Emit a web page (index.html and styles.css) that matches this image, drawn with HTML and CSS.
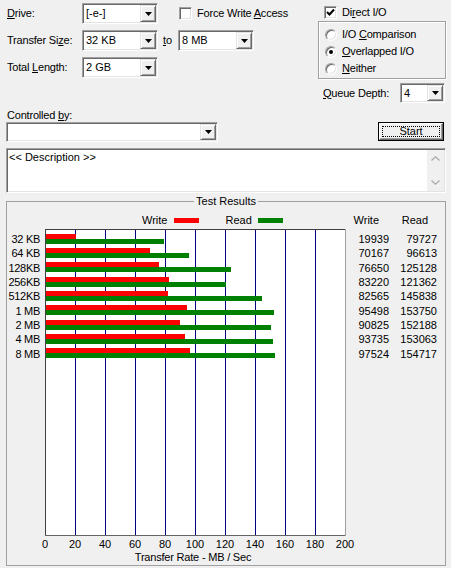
FILE: index.html
```html
<!DOCTYPE html>
<html>
<head>
<meta charset="utf-8">
<title>Disk Benchmark</title>
<link rel="stylesheet" href="styles.css">
</head>
<body>
<div class="win">
  <div class="top">
    <div class="left">
      <div class="row">
        <span class="lbl"><u>D</u>rive:</span>
        <div class="combo w76"><span class="val">[-e-]</span><span class="btn"><svg width="7" height="4" viewBox="0 0 7 4"><polygon points="0,0 7,0 3.5,4" fill="#000"/></svg></span></div>
        <span class="fwa"><span class="cb"></span><span>Force Write <u>A</u>ccess</span></span>
      </div>
      <div class="row">
        <span class="lbl">Transfer Si<u>z</u>e:</span>
        <div class="combo w76"><span class="val">32 KB</span><span class="btn"><svg width="7" height="4" viewBox="0 0 7 4"><polygon points="0,0 7,0 3.5,4" fill="#000"/></svg></span></div>
        <span class="to"><u>t</u>o</span>
        <div class="combo w76"><span class="val">8 MB</span><span class="btn"><svg width="7" height="4" viewBox="0 0 7 4"><polygon points="0,0 7,0 3.5,4" fill="#000"/></svg></span></div>
      </div>
      <div class="row">
        <span class="lbl">Total <u>L</u>ength:</span>
        <div class="combo w76"><span class="val">2 GB</span><span class="btn"><svg width="7" height="4" viewBox="0 0 7 4"><polygon points="0,0 7,0 3.5,4" fill="#000"/></svg></span></div>
      </div>
    </div>
    <div class="right">
      <div class="dio"><span class="cb"><svg width="9" height="9" viewBox="0 0 9 9"><polyline points="1,4 3.5,6.5 8,1.5" fill="none" stroke="#000" stroke-width="2"/></svg></span><span>Di<u>r</u>ect I/O</span></div>
      <div class="rgroup">
        <div class="rrow"><span class="rb"></span><span>I/O <u>C</u>omparison</span></div>
        <div class="rrow"><span class="rb on"></span><span><u>O</u>verlapped I/O</span></div>
        <div class="rrow"><span class="rb"></span><span><u>N</u>either</span></div>
      </div>
      <div class="qd">
        <span class="qlbl"><u>Q</u>ueue Depth:</span>
        <div class="combo w45 h20"><span class="val">4</span><span class="btn"><svg width="7" height="4" viewBox="0 0 7 4"><polygon points="0,0 7,0 3.5,4" fill="#000"/></svg></span></div>
      </div>
    </div>
  </div>

  <div class="ctl-lbl">Controlled <u>b</u>y:</div>
  <div class="ctl-row">
    <div class="combo w212 h20"><span class="val"></span><span class="btn"><svg width="7" height="4" viewBox="0 0 7 4"><polygon points="0,0 7,0 3.5,4" fill="#000"/></svg></span></div>
    <div class="start"><div class="face"><span class="focus">Start</span></div></div>
  </div>

  <div class="desc">
    <div class="txt">&lt;&lt; Description &gt;&gt;</div>
    <div class="sb">
      <span class="arr"><svg width="9" height="5" viewBox="0 0 9 5"><polyline points="0.5,4.5 4.5,0.8 8.5,4.5" fill="none" stroke="#a8a8a8" stroke-width="1.2"/></svg></span>
      <span class="arr"><svg width="9" height="5" viewBox="0 0 9 5"><polyline points="0.5,0.5 4.5,4.2 8.5,0.5" fill="none" stroke="#a8a8a8" stroke-width="1.2"/></svg></span>
    </div>
  </div>

  <fieldset class="results">
    <legend>Test Results</legend>
    <div class="chart">
      <div class="legend-cell"><span>Write</span><span class="sw red"></span><span class="rd">Read</span><span class="sw green"></span></div>
      <div class="hw">Write</div>
      <div class="hr">Read</div>

      <div class="ylabels">
        <div>32 KB</div><div>64 KB</div><div>128KB</div><div>256KB</div><div>512KB</div><div>1 MB</div><div>2 MB</div><div>4 MB</div><div>8 MB</div>
      </div>
      <svg class="plot" width="301" height="307" viewBox="0 0 301 307">
        <rect x="0" y="0" width="301" height="307" fill="#fff"/>
        <g stroke="#000080" stroke-width="1">
          <line x1="30.5" y1="1" x2="30.5" y2="306"/>
          <line x1="60.5" y1="1" x2="60.5" y2="306"/>
          <line x1="90.5" y1="1" x2="90.5" y2="306"/>
          <line x1="120.5" y1="1" x2="120.5" y2="306"/>
          <line x1="150.5" y1="1" x2="150.5" y2="306"/>
          <line x1="180.5" y1="1" x2="180.5" y2="306"/>
          <line x1="210.5" y1="1" x2="210.5" y2="306"/>
          <line x1="240.5" y1="1" x2="240.5" y2="306"/>
          <line x1="270.5" y1="1" x2="270.5" y2="306"/>
        </g>
        <line x1="0" y1="0.5" x2="301" y2="0.5" stroke="#404040"/>
        <line x1="0.5" y1="0" x2="0.5" y2="307" stroke="#404040"/>
        <line x1="0" y1="306.5" x2="301" y2="306.5" stroke="#646464"/>
        <line x1="300.5" y1="0" x2="300.5" y2="307" stroke="#a0a0a0"/>
        <g fill="#ff0000">
          <rect x="1" y="5" width="30" height="5"/>
          <rect x="1" y="19" width="104" height="5"/>
          <rect x="1" y="33" width="113" height="5"/>
          <rect x="1" y="48" width="123" height="5"/>
          <rect x="1" y="62" width="122" height="5"/>
          <rect x="1" y="76" width="141" height="5"/>
          <rect x="1" y="91" width="134" height="5"/>
          <rect x="1" y="105" width="139" height="5"/>
          <rect x="1" y="119" width="144" height="5"/>
        </g>
        <g fill="#008000">
          <rect x="1" y="10" width="118" height="5"/>
          <rect x="1" y="24" width="143" height="5"/>
          <rect x="1" y="38" width="185" height="5"/>
          <rect x="1" y="53" width="180" height="5"/>
          <rect x="1" y="67" width="216" height="5"/>
          <rect x="1" y="81" width="228" height="5"/>
          <rect x="1" y="96" width="225" height="5"/>
          <rect x="1" y="110" width="227" height="5"/>
          <rect x="1" y="124" width="229" height="5"/>
        </g>
      </svg>
      <div class="vals vw">
        <div>19939</div><div>70167</div><div>76650</div><div>83220</div><div>82565</div><div>95498</div><div>90825</div><div>93735</div><div>97524</div>
      </div>
      <div class="vals vr">
        <div>79727</div><div>96613</div><div>125128</div><div>121362</div><div>145838</div><div>153750</div><div>152188</div><div>153063</div><div>154717</div>
      </div>

      <div class="axis">
        <span>0</span><span>20</span><span>40</span><span>60</span><span>80</span><span>100</span><span>120</span><span>140</span><span>160</span><span>180</span><span>200</span>
      </div>
      <div class="axis-title">Transfer Rate - MB / Sec</div>
    </div>
  </fieldset>
</div>
</body>
</html>
```

FILE: styles.css
```css
* { box-sizing: border-box; }

body {
  margin: 0;
  background: #f0f0f0;
  font: 11px/13px "Liberation Sans", Arial, sans-serif;
  color: #000;
}

u { text-decoration: underline; text-underline-offset: 1px; }

.win {
  width: 451px;
  height: 568px;
  overflow: hidden;
}

/* ---- top area ---- */
.top {
  display: flex;
  height: 103px;
}

.left {
  width: 318px;
  padding: 3px 0 0 7px;
  display: flex;
  flex-direction: column;
  gap: 6px;
}

.row {
  display: flex;
  align-items: center;
  height: 21px;
}

.lbl { width: 75px; letter-spacing: -0.2px; white-space: nowrap; }

.combo {
  display: flex;
  height: 21px;
  padding: 1px;
  background: #fff;
  border: 1px solid;
  border-color: #a0a0a0 #fff #fff #a0a0a0;
  box-shadow: inset 1px 1px #696969, inset -1px -1px #e3e3e3;
}
.combo.h20 { height: 20px; }
.w76 { width: 76px; }
.w45 { width: 45px; }
.w212 { width: 212px; }

.combo .val {
  flex: 1;
  padding-left: 2px;
  line-height: 17px;
  white-space: nowrap;
  overflow: hidden;
}
.combo.h20 .val { line-height: 16px; }

.combo .btn {
  width: 16px;
  display: flex;
  align-items: center;
  justify-content: center;
  background: #f0f0f0;
  border: 1px solid;
  border-color: #e3e3e3 #696969 #696969 #e3e3e3;
  box-shadow: inset 1px 1px #fff, inset -1px -1px #a0a0a0;
}
.combo .btn svg { display: block; }

.to { margin-left: 5px; width: 15px; }

.fwa {
  margin-left: 21px;
  display: flex;
  align-items: center;
  gap: 5px;
  white-space: nowrap;
  letter-spacing: -0.2px;
}

.cb {
  width: 13px;
  height: 13px;
  flex: none;
  background: #fff;
  border: 1px solid;
  border-color: #a0a0a0 #fff #fff #a0a0a0;
  box-shadow: inset 1px 1px #696969, inset -1px -1px #e3e3e3;
  display: flex;
  align-items: center;
  justify-content: center;
}
.cb svg { display: block; }

.right {
  width: 128px;
  padding-top: 3px;
}

.dio {
  height: 18px;
  display: flex;
  align-items: center;
  gap: 5px;
  padding-left: 6px;
  letter-spacing: -0.2px;
}

.rgroup {
  height: 58px;
  border: 1px solid #a0a0a0;
  box-shadow: inset 1px 1px #fff, 1px 1px #fff;
  padding: 4px 0 0 6px;
}

.rrow {
  height: 17px;
  display: flex;
  align-items: center;
  gap: 5px;
  letter-spacing: -0.2px;
  white-space: nowrap;
}

.rb {
  width: 12px;
  height: 12px;
  flex: none;
  border-radius: 50%;
  background: #fff;
  border: 1px solid;
  border-color: #a0a0a0 #fff #fff #a0a0a0;
  box-shadow: inset 1px 1px #696969, inset -1px -1px #e3e3e3;
  display: flex;
  align-items: center;
  justify-content: center;
}
.rb.on::after {
  content: "";
  width: 4px;
  height: 4px;
  border-radius: 50%;
  background: #000;
}

.qd {
  margin-top: 4px;
  height: 20px;
  display: flex;
  align-items: center;
  padding-left: 5px;
}
.qlbl { width: 77px; letter-spacing: -0.2px; white-space: nowrap; }

/* ---- controlled by ---- */
.ctl-lbl {
  margin-top: 5px;
  height: 14px;
  line-height: 14px;
  padding-left: 7px;
  letter-spacing: -0.2px;
}

.ctl-row {
  display: flex;
  align-items: flex-start;
  justify-content: space-between;
  height: 20px;
  padding: 0 7px 0 6px;
}

.start {
  width: 66px;
  height: 19px;
  border: 1px solid #000;
}
.start .face {
  height: 100%;
  padding: 2px;
  background: #f0f0f0;
  border: 1px solid;
  border-color: #fff #696969 #696969 #fff;
  box-shadow: inset -1px -1px #a0a0a0;
}
.start .focus {
  height: 100%;
  display: flex;
  align-items: center;
  justify-content: center;
  border: 1px dotted #000;
}

/* ---- description ---- */
.desc {
  margin: 6px 0 0 6px;
  width: 440px;
  height: 45px;
  display: flex;
  padding: 1px;
  background: #fff;
  border: 1px solid;
  border-color: #a0a0a0 #fff #fff #a0a0a0;
  box-shadow: inset 1px 1px #696969, inset -1px -1px #e3e3e3;
}
.desc .txt {
  flex: 1;
  padding: 1px 0 0 1px;
}
.desc .sb {
  width: 17px;
  display: flex;
  flex-direction: column;
  justify-content: space-between;
  background: #f0f0f0;
}
.desc .arr {
  height: 17px;
  display: flex;
  align-items: center;
  justify-content: center;
}
.desc .arr svg { display: block; }

/* ---- results ---- */
.results {
  margin: 2px 0 0 6px;
  width: 440px;
  min-width: 0;
  padding: 0 0 1px 0;
  border: 1px solid #a0a0a0;
}
.results legend {
  margin: 0 auto;
  padding: 0 2px;
  line-height: 13px;
}

.chart {
  display: grid;
  grid-template-columns: 38px 301px 43px 48px;
  grid-template-rows: 21px 307px auto auto;
}

.legend-cell {
  grid-column: 2;
  grid-row: 1;
  display: flex;
  align-items: center;
  padding: 3px 0 0 97px;
}
.sw {
  width: 25px;
  height: 5px;
  display: block;
}
.sw.red { background: #ff0000; margin-left: 7px; }
.sw.green { background: #008000; margin-left: 6px; }
.rd { margin-left: 26px; }

.hw, .hr {
  grid-row: 1;
  padding-top: 6px;
  text-align: right;
}
.hw { grid-column: 3; padding-right: 10px; }
.hr { grid-column: 4; padding-right: 9px; }

.ylabels {
  grid-column: 1;
  grid-row: 2;
  padding: 3px 5px 0 0;
  text-align: right;
  line-height: 14.33px;
  letter-spacing: -0.3px;
  white-space: nowrap;
}

.plot {
  grid-column: 2;
  grid-row: 2;
  display: block;
}

.vals {
  grid-row: 2;
  padding-top: 3px;
  text-align: right;
  line-height: 14.33px;
}
.vw { grid-column: 3; }
.vr { grid-column: 4; }

.axis {
  grid-column: 1 / -1;
  grid-row: 3;
  display: flex;
  padding: 2px 0 0 23px;
}
.axis span {
  width: 30px;
  flex: none;
  text-align: center;
}

.axis-title {
  grid-column: 2;
  grid-row: 4;
  text-align: center;
  padding-right: 5px;
  letter-spacing: -0.2px;
}
```
